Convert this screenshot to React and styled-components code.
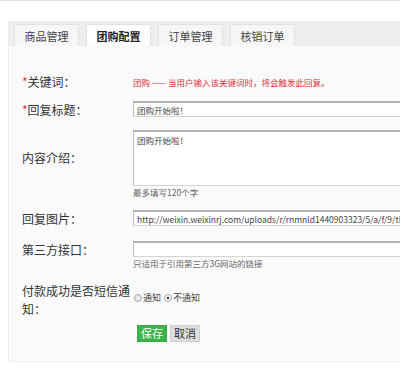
import React from "react";
import styled, { createGlobalStyle } from "styled-components";

const GlobalStyle = createGlobalStyle`
  html, body {
    margin: 0;
    padding: 0;
    overflow: hidden;
    background: #fff;
  }
  body {
    font-family: "Noto Sans CJK SC", "Microsoft YaHei", sans-serif;
    color: #333;
  }
`;

const Page = styled.div`
  border-top: 1px solid #e2e2e2;
  padding: 20px 0 0 8px;
  overflow: hidden;
`;

const TabBar = styled.div`
  display: flex;
  gap: 7px;
  height: 25px;
  padding-left: 6px;
  box-sizing: border-box;
  align-items: flex-end;
  background: #eeeeee;
`;

const Tab = styled.div`
  width: 65px;
  height: 22px;
  box-sizing: border-box;
  border: 1px solid #e2e2e2;
  border-bottom: none;
  background: ${p => (p.$active ? "#ffffff" : "#f6f6f6")};
  color: ${p => (p.$active ? "#222" : "#444")};
  font-weight: ${p => (p.$active ? 700 : 400)};
  font-size: 11px;
  display: flex;
  align-items: center;
  justify-content: center;
`;

const Panel = styled.div`
  background: #fafafa;
  border: 1px solid #efefef;
  border-top: none;
  border-right: none;
  padding: 26px 0 19px 13px;
  overflow: hidden;
`;

const Row = styled.div`
  display: flex;
  align-items: flex-start;
  margin-top: ${p => p.$mt || 0}px;
`;

const Label = styled.div`
  width: 111px;
  flex: none;
  min-height: ${p => p.$h}px;
  font-size: 12px;
  line-height: ${p => p.$lh || 18}px;
  display: flex;
  align-items: center;
  color: #333;
`;

const Star = styled.span`
  color: #e0303c;
`;

const Field = styled.div`
  display: flex;
  flex-direction: column;
  flex: none;
`;

const Notice = styled.div`
  font-size: 8.5px;
  color: #e0303c;
  line-height: 20px;
  white-space: nowrap;
`;

const TextInput = styled.input`
  width: 330px;
  flex: none;
  height: 16px;
  box-sizing: border-box;
  border: 1px solid #d4d4d4;
  border-top: 2px solid #b4b4b4;
  border-left: 1px solid #bcbcbc;
  background: #fff;
  padding: 0 3px;
  font-family: inherit;
  font-size: 8.5px;
  color: #444;
  outline: none;
`;

const TextArea = styled.textarea`
  width: 330px;
  height: 56px;
  box-sizing: border-box;
  border: 1px solid #d4d4d4;
  border-top: 2px solid #b4b4b4;
  border-left: 1px solid #bcbcbc;
  background: #fff;
  padding: 2px 3px;
  font-family: inherit;
  font-size: 8.5px;
  color: #444;
  resize: none;
  outline: none;
`;

const Hint = styled.div`
  font-size: 8.5px;
  line-height: 12px;
  color: #666;
`;

const Radios = styled.div`
  display: flex;
  align-items: center;
  gap: 2px;
  padding-top: 9px;
  font-size: 9px;
  color: #444;
`;

const RadioLabel = styled.label`
  display: flex;
  align-items: center;
`;

const Radio = styled.input`
  appearance: none;
  width: 8px;
  height: 8px;
  margin: 0 1px 0 1px;
  border-radius: 50%;
  border: 1px solid #a8a8a8;
  background: radial-gradient(circle, #f4f4f4 0%, #dcdcdc 100%);
  &:checked {
    background: radial-gradient(circle, #333 0 28%, #f2f2f2 36% 100%);
  }
`;

const Buttons = styled.div`
  display: flex;
  gap: 3px;
  margin-left: 115px;
`;

const Button = styled.button`
  width: 30px;
  height: 17px;
  padding: 0;
  border: 1px solid ${p => (p.$primary ? "#3aa845" : "#cfcfcf")};
  background: ${p => (p.$primary ? "#3db34a" : "#dedede")};
  color: ${p => (p.$primary ? "#fff" : "#333")};
  font-family: inherit;
  font-size: 11px;
  line-height: 15px;
`;

const tabs = ["商品管理", "团购配置", "订单管理", "核销订单"];

export default () => {
  return (
    <>
      <GlobalStyle />
      <Page>
        <TabBar>
          {tabs.map(t => (
            <Tab key={t} $active={t === "团购配置"}>{t}</Tab>
          ))}
        </TabBar>
        <Panel>
          <Row>
            <Label $h={20}><Star>*</Star>关键词：</Label>
            <Notice>团购 —— 当用户输入该关键词时，将会触发此回复。</Notice>
          </Row>
          <Row $mt={9}>
            <Label $h={16}><Star>*</Star>回复标题：</Label>
            <TextInput defaultValue="团购开始啦！" />
          </Row>
          <Row $mt={11}>
            <Label $h={56}>内容介绍：</Label>
            <Field>
              <TextArea defaultValue="团购开始啦！" />
              <Hint>最多填写120个字</Hint>
            </Field>
          </Row>
          <Row $mt={12}>
            <Label $h={16}>回复图片：</Label>
            <TextInput defaultValue="http://weixin.weixinrj.com/uploads/r/rnmnld1440903323/5/a/f/9/thumb_55e3e1a0e5c8a.jpg" />
          </Row>
          <Row $mt={13}>
            <Label $h={16}>第三方接口：</Label>
            <Field>
              <TextInput defaultValue="" />
              <Hint>只适用于引用第三方3G网站的链接</Hint>
            </Field>
          </Row>
          <Row $mt={13}>
            <Label $h={36}>付款成功是否短信通知：</Label>
            <Radios>
              <RadioLabel><Radio type="radio" name="sms" />通知</RadioLabel>
              <RadioLabel><Radio type="radio" name="sms" defaultChecked />不通知</RadioLabel>
            </Radios>
          </Row>
          <Row $mt={7}>
            <Buttons>
              <Button $primary>保存</Button>
              <Button>取消</Button>
            </Buttons>
          </Row>
        </Panel>
      </Page>
    </>
  );
};
